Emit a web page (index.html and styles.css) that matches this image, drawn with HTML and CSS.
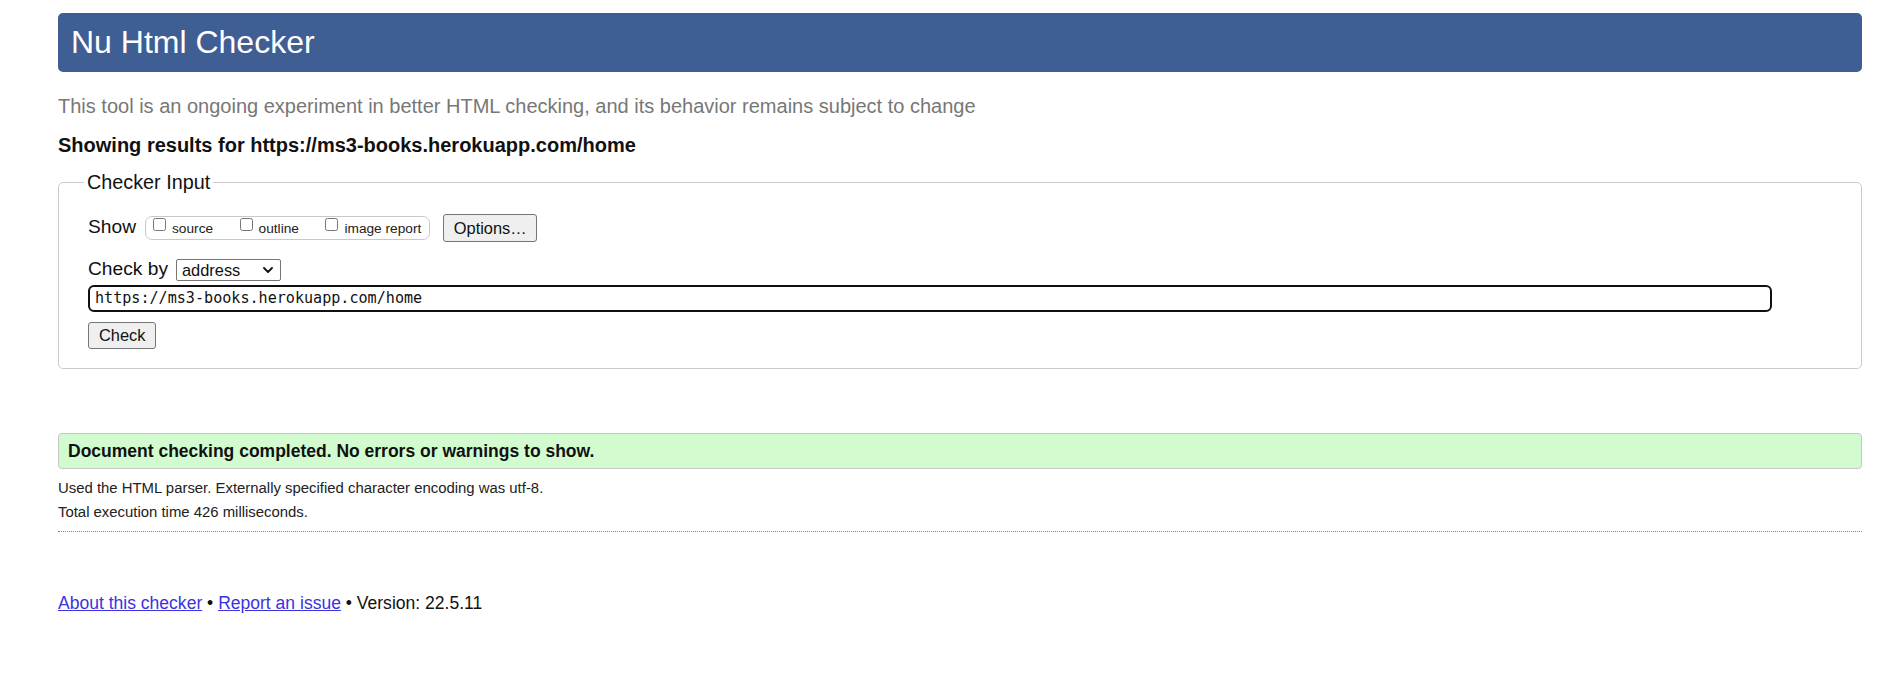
FILE: index.html
```html
<!DOCTYPE html>
<html lang="en">
<head>
<meta charset="utf-8">
<title>Nu Html Checker</title>
<link rel="stylesheet" href="styles.css">
</head>
<body>
<div class="page">
  <h1 class="title">Nu Html Checker</h1>
  <p class="lead">This tool is an ongoing experiment in better HTML checking, and its behavior remains subject to change</p>
  <h2 class="showing">Showing results for https://ms3-books.herokuapp.com/home</h2>
  <form class="checker">
    <fieldset class="fs">
      <legend class="legend">Checker Input</legend>
      <div class="row row-show">
        <span class="lbl lbl-show">Show</span>
        <span class="group">
          <label class="opt"><input type="checkbox" class="cb"><span class="opt-text">source</span></label>
          <label class="opt"><input type="checkbox" class="cb"><span class="opt-text">outline</span></label>
          <label class="opt"><input type="checkbox" class="cb"><span class="opt-text">image report</span></label>
        </span>
        <button type="button" class="btn btn-options">Options…</button>
      </div>
      <div class="row row-by">
        <span class="lbl lbl-by">Check by</span>
        <span class="select-wrap">
          <select class="select"><option>address</option></select>
          <svg class="chev" viewBox="0 0 10 6" aria-hidden="true"><path d="M1 1 L5 5 L9 1" fill="none" stroke="#111" stroke-width="1.8" stroke-linecap="round" stroke-linejoin="round"/></svg>
        </span>
      </div>
      <input class="url" type="url" value="https://ms3-books.herokuapp.com/home">
      <button type="button" class="btn btn-check">Check</button>
    </fieldset>
  </form>
  <p class="success">Document checking completed. No errors or warnings to show.</p>
  <div class="details">
    <p class="info">Used the HTML parser. Externally specified character encoding was utf-8.</p>
    <p class="info">Total execution time 426 milliseconds.</p>
  </div>
  <p class="footer"><a href="#">About this checker</a> • <a href="#">Report an issue</a> • Version: 22.5.11</p>
</div>
</body>
</html>
```

FILE: styles.css
```css
* { box-sizing: border-box; }
body {
  margin: 0;
  background: #fff;
  color: #111;
  font-family: "Liberation Sans", Arial, sans-serif;
}
.page { padding: 13px 24px 40px 58px; }
.title {
  margin: 0;
  background: #3f5e94;
  color: #fff;
  font-weight: normal;
  font-size: 32px;
  line-height: 37px;
  padding: 11px 12px 11px 13px;
  border-radius: 5px;
}
.lead {
  margin: 22px 0 0;
  font-size: 20px;
  line-height: 24px;
  color: #777;
}
.showing {
  margin: 15px 0 0;
  font-size: 20px;
  line-height: 24px;
  font-weight: bold;
  color: #111;
}
.checker { margin: 14px 0 0; }
.fs {
  margin: 0;
  border: 1px solid #cbcbcb;
  border-radius: 5px;
  padding: 20px 29px 19px 29px;
  min-width: 0;
}
.legend {
  margin-left: -4px;
  padding: 0 3px;
  font-size: 19.8px;
  line-height: 23px;
  color: #111;
}
.row { display: flex; align-items: center; }
.row-show { height: 28px; }
.lbl {
  font-size: 19.2px;
  line-height: 20px;
  margin-bottom: 2.6px;
  color: #111;
}
.lbl-show { margin-right: 9px; }
.group {
  display: flex;
  align-items: flex-start;
  gap: 22.5px;
  height: 24px;
  padding: 0 8px 0 3px;
  border: 1px solid #c9c9c9;
  border-radius: 7px;
}
.opt {
  display: flex;
  align-items: flex-start;
  font-size: 13.7px;
  line-height: 16px;
  color: #222;
}
.cb { margin: 1px 3px 0 4px; width: 13px; height: 13px; }
.opt-text { margin: 3.5px 0 0 3px; }
.btn {
  font-family: "Liberation Sans", Arial, sans-serif;
  font-size: 16.4px;
  color: #111;
  background: #efefef;
  border: 1px solid #767676;
  border-radius: 3px;
  padding: 0 9.5px;
}
.btn-options { margin-left: 13px; height: 28px; }
.row-by { margin-top: 17px; height: 22.5px; }
.lbl-by { margin-right: 8px; }
.select-wrap { position: relative; display: block; }
.select {
  appearance: none;
  -webkit-appearance: none;
  display: block;
  width: 104.7px;
  height: 22.4px;
  border: 1px solid #767676;
  border-radius: 2px;
  background: #fff;
  font-family: "Liberation Sans", Arial, sans-serif;
  font-size: 16.4px;
  color: #111;
  padding: 0 0 0 5px;
  margin: 0;
}
.chev {
  position: absolute;
  right: 7.5px;
  top: 8px;
  width: 10px;
  height: 6px;
  pointer-events: none;
}
.url {
  display: block;
  margin: 3.3px 0 0;
  width: calc(100% - 60px);
  height: 27px;
  border: 2px solid #101010;
  border-radius: 6px;
  padding: 0 5px;
  font-family: "DejaVu Sans Mono", "Liberation Mono", monospace;
  font-size: 15.1px;
  color: #111;
  outline: none;
  background: #fff;
}
.btn-check { display: block; margin-top: 10.3px; height: 27px; padding: 0 10px; }
.success {
  margin: 64px 0 0;
  border: 1px solid #c6c6c6;
  border-radius: 4px;
  background: #d3fbd0;
  height: 36px;
  padding: 0 9px;
  font-weight: bold;
  font-size: 17.5px;
  line-height: 34px;
  color: #111;
}
.details {
  margin-top: 7px;
  padding-bottom: 6.6px;
  border-bottom: 1px dotted #888;
}
.info {
  margin: 0;
  font-size: 14.9px;
  line-height: 24px;
  color: #222;
}
.footer {
  margin: 59px 0 0;
  font-size: 17.55px;
  line-height: 24px;
  color: #111;
}
.footer a { color: #3b32e0; }
```
